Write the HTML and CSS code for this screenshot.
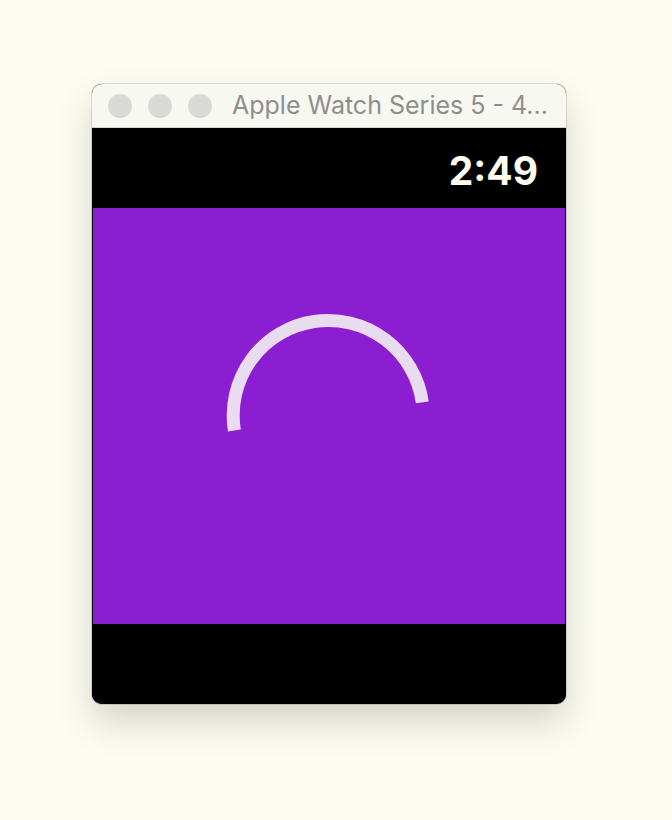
FILE: index.html
```html
<!DOCTYPE html>
<html>
<head>
<meta charset="utf-8">
<link rel="stylesheet" href="styles.css">
</head>
<body>
<div class="stage">
  <div class="window">
    <div class="titlebar">
      <div class="lights">
        <span class="light"></span>
        <span class="light"></span>
        <span class="light"></span>
      </div>
      <div class="title">Apple Watch Series 5 - 4...</div>
    </div>
    <div class="statusbar">
      <span class="time">2:49</span>
    </div>
    <div class="screen">
      <svg class="spinner" width="472" height="416" viewBox="0 0 472 416">
        <path d="M141.4 222.5 A95 95 0 1 1 329.3 194.4" fill="none" stroke="#e9dbf0" stroke-width="13" stroke-linecap="butt"/>
      </svg>
    </div>
    <div class="bottombar"></div>
  </div>
</div>
</body>
</html>
```
FILE: styles.css
```css
html, body {
  margin: 0;
  padding: 0;
  background: #fcfcf1;
  width: 672px;
  height: 820px;
  overflow: hidden;
}
.stage {
  padding: 84px 0 0 92px;
}
.window {
  width: 474px;
  height: 620px;
  border-radius: 10px;
  overflow: hidden;
  background: #000;
  box-shadow: 0 18px 36px rgba(0, 0, 0, 0.16), 0 0 0 1px rgba(0, 0, 0, 0.12);
  display: flex;
  flex-direction: column;
}
.titlebar {
  height: 44px;
  background: #f8f8f2;
  border-bottom: 1px solid #d4d4d0;
  box-sizing: border-box;
  display: flex;
  align-items: center;
  padding-left: 16px;
}
.lights {
  display: flex;
  gap: 16px;
}
.light {
  width: 24px;
  height: 24px;
  border-radius: 50%;
  background: #d9d9d6;
}
.title {
  margin-left: 20px;
  font-family: Inter, "Open Sans", sans-serif;
  font-size: 25px;
  color: #8e8e8c;
  white-space: nowrap;
  margin-top: -2px;
}
.statusbar {
  height: 80px;
  background: #000;
  display: flex;
  justify-content: flex-end;
  align-items: center;
  padding-right: 28px;
}
.time {
  font-family: Inter, "Open Sans", sans-serif;
  font-weight: 700;
  font-size: 39px;
  color: #fffdf0;
  margin-top: 4px;
}
.screen {
  height: 416px;
  margin: 0 1px;
  background: #8b1ed0;
}
.spinner {
  display: block;
}
.bottombar {
  flex: 1;
  background: #000;
}
```
